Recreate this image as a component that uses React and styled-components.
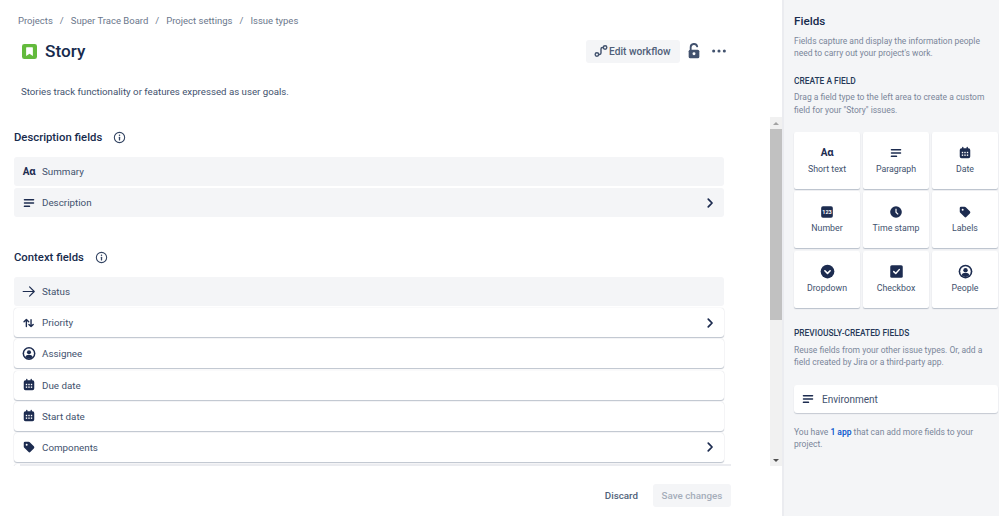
import React from "react";
import styled, { createGlobalStyle } from "styled-components";

const INK = "#172b4d";
const NAVY = "#1d2c50";
const FONT = `Roboto, "Noto Sans", sans-serif`;

const GlobalStyle = createGlobalStyle`
  html, body {
    margin: 0;
    padding: 0;
    background: #fff;
    font-family: ${FONT};
    color: ${INK};
  }
`;

const Page = styled.div`
  display: flex;
  width: 999px;
  height: 516px;
  overflow: hidden;
`;
const Main = styled.main`
  width: 782px;
  flex-shrink: 0;
  display: flex;
  flex-direction: column;
`;
const Header = styled.header`
  height: 117px;
  flex-shrink: 0;
  padding: 14px 55px 0 18px;
  box-sizing: border-box;
`;
const Breadcrumbs = styled.nav`
  display: flex;
  font-size: 9.5px;
  line-height: 14px;
  color: #6b778c;
`;
const Crumb = styled.span`
  white-space: nowrap;
`;
const Slash = styled.span`
  margin: 0 7px;
`;
const TitleRow = styled.div`
  display: flex;
  align-items: center;
  height: 24px;
  margin: 11px 0 0 4px;
`;
const Title = styled.h1`
  flex: 1;
  margin: 0 0 0 8px;
  font-size: 17.2px;
  font-weight: 500;
  line-height: 24px;
  color: ${INK};
`;
const WorkflowButton = styled.button`
  display: flex;
  align-items: center;
  gap: 1px;
  width: 94px;
  height: 23px;
  margin-right: 6px;
  padding: 0 0 0 8px;
  box-sizing: border-box;
  border: 0;
  border-radius: 3px;
  background: #f4f5f7;
  color: #505f79;
  font: 500 10.2px ${FONT};
  white-space: nowrap;
`;
const IconButton = styled.span`
  display: flex;
  margin-left: ${(p) => p.$gap || 0}px;
  color: #42526e;
`;
const Lead = styled.p`
  margin: 22px 0 0 3px;
  font-size: 9.7px;
  line-height: 14px;
  color: #42526e;
`;
const ScrollRow = styled.div`
  display: flex;
  height: 349px;
  flex-shrink: 0;
`;
const ScrollContent = styled.div`
  width: 770px;
  flex-shrink: 0;
  padding: 0 46px 0 14px;
  box-sizing: border-box;
  overflow: hidden;
`;
const Track = styled.div`
  width: 12px;
  display: flex;
  flex-direction: column;
  align-items: center;
  background: #f1f1f1;
`;
const TrackArrow = styled.span`
  flex-shrink: 0;
  height: 12px;
  width: 100%;
  display: flex;
  align-items: center;
  justify-content: center;
  &::before {
    content: "";
    border-left: 3px solid transparent;
    border-right: 3px solid transparent;
    ${(p) => (p.$down ? "border-top: 3px solid #505050;" : "border-bottom: 3px solid #a3a3a3;")}
  }
`;
const Thumb = styled.span`
  width: 100%;
  height: 191px;
  background: #c1c1c1;
`;
const TrackRest = styled.span`
  flex: 1;
`;
const SectionHead = styled.div`
  display: flex;
  align-items: center;
  gap: 11px;
  height: 16px;
  margin-top: ${(p) => p.$top}px;
  margin-bottom: 12px;
`;
const SectionTitle = styled.h2`
  margin: 0;
  padding-top: 1px;
  font-size: 11.3px;
  font-weight: 500;
  line-height: 16px;
  color: ${INK};
`;
const Fields = styled.div`
  display: flex;
  flex-direction: column;
  gap: ${(p) => p.$gap}px;
`;
const FieldRow = styled.div`
  display: flex;
  align-items: center;
  height: 29px;
  flex-shrink: 0;
  padding: 0 7px 0 8px;
  box-sizing: border-box;
  border-radius: 3px;
  background: ${(p) => (p.$locked ? "#f4f5f7" : "#fff")};
  box-shadow: ${(p) =>
    p.$locked ? "none" : "0 1px 1px rgba(9,30,66,.25), 0 0 1px rgba(9,30,66,.2)"};
`;
const FieldIcon = styled.span`
  width: 14px;
  height: 14px;
  display: flex;
  align-items: center;
  justify-content: center;
  color: ${NAVY};
`;
const FieldName = styled.span`
  flex: 1;
  margin-left: 6px;
  font-size: 9.8px;
  color: #42526e;
`;
const Footer = styled.footer`
  position: relative;
  margin: -2px 51px 0 20px;
  border-top: 2px solid #ebecf0;
  padding-top: 18px;
  display: flex;
  justify-content: flex-end;
  align-items: center;
  gap: 15px;
`;
const DiscardButton = styled.button`
  border: 0;
  padding: 0;
  background: none;
  color: #505f79;
  font: 500 9.8px ${FONT};
`;
const SaveButton = styled.button`
  width: 78px;
  height: 23px;
  border: 0;
  padding: 0;
  border-radius: 3px;
  background: #f4f5f7;
  color: #a5adba;
  font: 500 9.8px ${FONT};
`;
const Panel = styled.aside`
  flex: 1;
  padding: 14px 1px 0 10px;
  background: #f4f5f7;
  border-left: 2px solid #ebecf0;
`;
const PanelTitle = styled.h2`
  margin: 0;
  font-size: 11.7px;
  font-weight: 500;
  line-height: 15px;
  color: ${INK};
`;
const Hint = styled.p`
  margin: ${(p) => p.$top || 0}px 9px 0 0;
  font-size: 8.5px;
  line-height: 12.2px;
  color: #7a869a;
`;
const Overline = styled.h3`
  margin: ${(p) => p.$top}px 0 0;
  font-size: 8.4px;
  font-weight: 500;
  line-height: 12px;
  color: #253858;
`;
const CardGrid = styled.div`
  display: grid;
  grid-template-columns: repeat(3, 66px);
  grid-auto-rows: 57px;
  gap: 2.5px 3px;
  margin-top: 16px;
`;
const Card = styled.div`
  display: flex;
  flex-direction: column;
  align-items: center;
  padding-top: 14px;
  box-sizing: border-box;
  border-radius: 2px;
  background: #fff;
  box-shadow: 0 1px 1px rgba(9, 30, 66, 0.25);
`;
const CardIcon = styled.span`
  height: 14px;
  display: flex;
  align-items: center;
  color: ${NAVY};
`;
const CardLabel = styled.span`
  margin-top: 3px;
  font-size: 8.8px;
  line-height: 13px;
  color: #42526e;
  white-space: nowrap;
`;
const TextGlyph = styled.span`
  font-size: 10px;
  font-weight: 700;
  line-height: 14px;
  letter-spacing: -0.2px;
  color: ${NAVY};
`;
const EnvironmentCard = styled.div`
  display: flex;
  align-items: center;
  height: 28px;
  margin-top: 17px;
  padding-left: 7px;
  border-radius: 3px;
  background: #fff;
  box-shadow: 0 1px 1px rgba(9, 30, 66, 0.2);
  color: ${NAVY};
`;
const EnvironmentName = styled.span`
  margin-left: 7px;
  padding-top: 1px;
  font-size: 10px;
  color: #42526e;
`;
const AppLink = styled.span`
  color: #0052cc;
  font-weight: 500;
`;

const Svg = ({ size = 14, children }) => (
  <svg width={size} height={size} viewBox="0 0 24 24" fill="currentColor" aria-hidden="true">
    {children}
  </svg>
);

const ParagraphIcon = () => (
  <Svg>
    <rect x="3" y="5" width="18" height="2.6" rx="1.2" />
    <rect x="3" y="10.7" width="18" height="2.6" rx="1.2" />
    <rect x="3" y="16.4" width="11" height="2.6" rx="1.2" />
  </Svg>
);
const CalendarIcon = () => (
  <Svg>
    <path d="M3 7a3 3 0 0 1 3-3h1V2.5a1.2 1.2 0 0 1 2.4 0V4h5.2V2.5a1.2 1.2 0 0 1 2.4 0V4h1a3 3 0 0 1 3 3v11a3 3 0 0 1-3 3H6a3 3 0 0 1-3-3z" />
    <g fill="#fff">
      <rect x="6.5" y="10" width="2.4" height="2.4" />
      <rect x="10.8" y="10" width="2.4" height="2.4" />
      <rect x="15.1" y="10" width="2.4" height="2.4" />
      <rect x="6.5" y="14.5" width="2.4" height="2.4" />
      <rect x="10.8" y="14.5" width="2.4" height="2.4" />
      <rect x="15.1" y="14.5" width="2.4" height="2.4" />
    </g>
  </Svg>
);
const NumberIcon = () => (
  <Svg>
    <rect x="2" y="2" width="20" height="20" rx="3" />
    <text x="12" y="15.5" fontSize="9.5" fontWeight="700" textAnchor="middle" fill="#fff">
      123
    </text>
  </Svg>
);
const ClockIcon = () => (
  <Svg>
    <circle cx="12" cy="12" r="10" />
    <path d="M11 6.5h2V12l3.4 3.4-1.4 1.4L11 12.8z" fill="#fff" />
  </Svg>
);
const TagIcon = () => (
  <Svg>
    <path d="M3 5.2A2.2 2.2 0 0 1 5.2 3h6a3 3 0 0 1 2.1.9l7 7a2.6 2.6 0 0 1 0 3.7l-5.7 5.7a2.6 2.6 0 0 1-3.7 0l-7-7a3 3 0 0 1-.9-2.1z" />
    <circle cx="8" cy="8" r="1.7" fill="#fff" />
  </Svg>
);
const DropdownIcon = () => (
  <Svg size={15}>
    <circle cx="12" cy="12" r="11" />
    <path d="M7.8 10.8 12 15l4.2-4.2" fill="none" stroke="#fff" strokeWidth="2.6" strokeLinecap="round" strokeLinejoin="round" />
  </Svg>
);
const CheckboxIcon = () => (
  <Svg size={15}>
    <rect x="2" y="2" width="20" height="20" rx="2.5" />
    <path d="M7.6 12.2 10.8 15.3 16.4 9" fill="none" stroke="#fff" strokeWidth="2.4" strokeLinecap="round" strokeLinejoin="round" />
  </Svg>
);
const PersonIcon = () => (
  <Svg size={15}>
    <circle cx="12" cy="12" r="11" />
    <circle cx="12" cy="12" r="8.4" fill="#fff" />
    <circle cx="12" cy="9.8" r="3.5" />
    <path d="M5.8 18c.8-2.8 3-4 6.2-4s5.4 1.2 6.2 4a8.2 8.2 0 0 1-12.4 0z" />
  </Svg>
);
const ArrowIcon = () => (
  <Svg size={15}>
    <path d="M2 12h19M13 4 21 12 13 20" fill="none" stroke="currentColor" strokeWidth="2" strokeLinecap="round" strokeLinejoin="round" />
  </Svg>
);
const PriorityIcon = () => (
  <Svg>
    <path d="M7.5 18V6.5M3.5 10l4-4 4 4M15.5 6.5V18M11.8 14.5l3.7 3.7 3.7-3.7" fill="none" stroke="currentColor" strokeWidth="2.4" strokeLinecap="round" strokeLinejoin="round" />
  </Svg>
);
const ChevronIcon = () => (
  <svg width="14" height="14" viewBox="0 0 24 24" aria-hidden="true">
    <path d="m9 5.5 6.5 6.5L9 18.5" fill="none" stroke={NAVY} strokeWidth="3" strokeLinecap="round" strokeLinejoin="round" />
  </svg>
);
const InfoIcon = () => (
  <svg width="13" height="13" viewBox="0 0 24 24" aria-hidden="true">
    <circle cx="12" cy="12" r="9.5" fill="none" stroke="#344563" strokeWidth="2" />
    <rect x="10.8" y="10.5" width="2.4" height="7" rx="1" fill="#344563" />
    <circle cx="12" cy="7.8" r="1.4" fill="#344563" />
  </svg>
);
const StoryIcon = () => (
  <svg width="15" height="15" viewBox="0 0 16 16" aria-hidden="true">
    <rect width="16" height="16" rx="2.5" fill="#63ba3c" />
    <path d="M5 3.5h6a.6.6 0 0 1 .6.6v8.7L8 10.4l-3.6 2.4V4.1a.6.6 0 0 1 .6-.6z" fill="#fff" />
  </svg>
);
const WorkflowIcon = () => (
  <svg width="14" height="14" viewBox="0 0 24 24" aria-hidden="true">
    <circle cx="5" cy="18" r="3" fill="none" stroke="#42526e" strokeWidth="2.4" />
    <circle cx="19" cy="6" r="3" fill="none" stroke="#42526e" strokeWidth="2.4" />
    <path d="M8 18h1.5a2.5 2.5 0 0 0 2.5-2.5v-7A2.5 2.5 0 0 1 14.5 6H16" fill="none" stroke="#42526e" strokeWidth="2.4" />
  </svg>
);
const LockIcon = () => (
  <svg width="16" height="16" viewBox="0 0 24 24" aria-hidden="true">
    <path d="M7 11V6.5a5 5 0 0 1 9.8-1.4" fill="none" stroke="#42526e" strokeWidth="2.8" strokeLinecap="round" />
    <rect x="4" y="10" width="16" height="13" rx="2.5" fill="#42526e" />
    <circle cx="12" cy="16" r="2.2" fill="#fff" />
  </svg>
);
const DotsIcon = () => (
  <svg width="16" height="16" viewBox="0 0 24 24" aria-hidden="true">
    <circle cx="4" cy="12" r="2.3" fill="#42526e" />
    <circle cx="12" cy="12" r="2.3" fill="#42526e" />
    <circle cx="20" cy="12" r="2.3" fill="#42526e" />
  </svg>
);

const descriptionFields = [
  { name: "Summary", icon: <TextGlyph>Aɑ</TextGlyph> },
  { name: "Description", icon: <ParagraphIcon />, more: true },
];
const contextFields = [
  { name: "Status", icon: <ArrowIcon />, locked: true },
  { name: "Priority", icon: <PriorityIcon />, more: true },
  { name: "Assignee", icon: <PersonIcon /> },
  { name: "Due date", icon: <CalendarIcon /> },
  { name: "Start date", icon: <CalendarIcon /> },
  { name: "Components", icon: <TagIcon />, more: true },
  { name: "", icon: null },
];
const fieldTypes = [
  { name: "Short text", icon: <TextGlyph>Aɑ</TextGlyph> },
  { name: "Paragraph", icon: <ParagraphIcon /> },
  { name: "Date", icon: <CalendarIcon /> },
  { name: "Number", icon: <NumberIcon /> },
  { name: "Time stamp", icon: <ClockIcon /> },
  { name: "Labels", icon: <TagIcon /> },
  { name: "Dropdown", icon: <DropdownIcon /> },
  { name: "Checkbox", icon: <CheckboxIcon /> },
  { name: "People", icon: <PersonIcon /> },
];
const crumbs = ["Projects", "Super Trace Board", "Project settings", "Issue types"];

const renderField = (field, locked) => (
  <FieldRow key={field.name || "next"} $locked={locked || field.locked}>
    <FieldIcon>{field.icon}</FieldIcon>
    <FieldName>{field.name}</FieldName>
    {field.more && <ChevronIcon />}
  </FieldRow>
);

const App = () => (
  <Page>
    <GlobalStyle />
    <Main>
      <Header>
        <Breadcrumbs>
          {crumbs.map((crumb, i) => (
            <React.Fragment key={crumb}>
              {i > 0 && <Slash>/</Slash>}
              <Crumb>{crumb}</Crumb>
            </React.Fragment>
          ))}
        </Breadcrumbs>
        <TitleRow>
          <StoryIcon />
          <Title>Story</Title>
          <WorkflowButton>
            <WorkflowIcon />
            Edit workflow
          </WorkflowButton>
          <IconButton>
            <LockIcon />
          </IconButton>
          <IconButton $gap={9}>
            <DotsIcon />
          </IconButton>
        </TitleRow>
        <Lead>Stories track functionality or features expressed as user goals.</Lead>
      </Header>
      <ScrollRow>
        <ScrollContent>
          <SectionHead $top={12}>
            <SectionTitle>Description fields</SectionTitle>
            <InfoIcon />
          </SectionHead>
          <Fields $gap={2}>{descriptionFields.map((f) => renderField(f, true))}</Fields>
          <SectionHead $top={32}>
            <SectionTitle>Context fields</SectionTitle>
            <InfoIcon />
          </SectionHead>
          <Fields $gap={2.2}>{contextFields.map((f) => renderField(f, false))}</Fields>
        </ScrollContent>
        <Track>
          <TrackArrow />
          <Thumb />
          <TrackRest />
          <TrackArrow $down />
        </Track>
      </ScrollRow>
      <Footer>
        <DiscardButton>Discard</DiscardButton>
        <SaveButton disabled>Save changes</SaveButton>
      </Footer>
    </Main>
    <Panel>
      <PanelTitle>Fields</PanelTitle>
      <Hint $top={6}>
        Fields capture and display the information people need to carry out your project's work.
      </Hint>
      <Overline $top={16}>CREATE A FIELD</Overline>
      <Hint $top={4}>
        Drag a field type to the left area to create a custom field for your "Story" issues.
      </Hint>
      <CardGrid>
        {fieldTypes.map((type) => (
          <Card key={type.name}>
            <CardIcon>{type.icon}</CardIcon>
            <CardLabel>{type.name}</CardLabel>
          </Card>
        ))}
      </CardGrid>
      <Overline $top={19}>PREVIOUSLY-CREATED FIELDS</Overline>
      <Hint $top={5}>
        Reuse fields from your other issue types. Or, add a field created by Jira or a third-party
        app.
      </Hint>
      <EnvironmentCard>
        <ParagraphIcon />
        <EnvironmentName>Environment</EnvironmentName>
      </EnvironmentCard>
      <Hint $top={13}>
        You have <AppLink>1 app</AppLink> that can add more fields to your
        <br />
        project.
      </Hint>
    </Panel>
  </Page>
);

export default App;
